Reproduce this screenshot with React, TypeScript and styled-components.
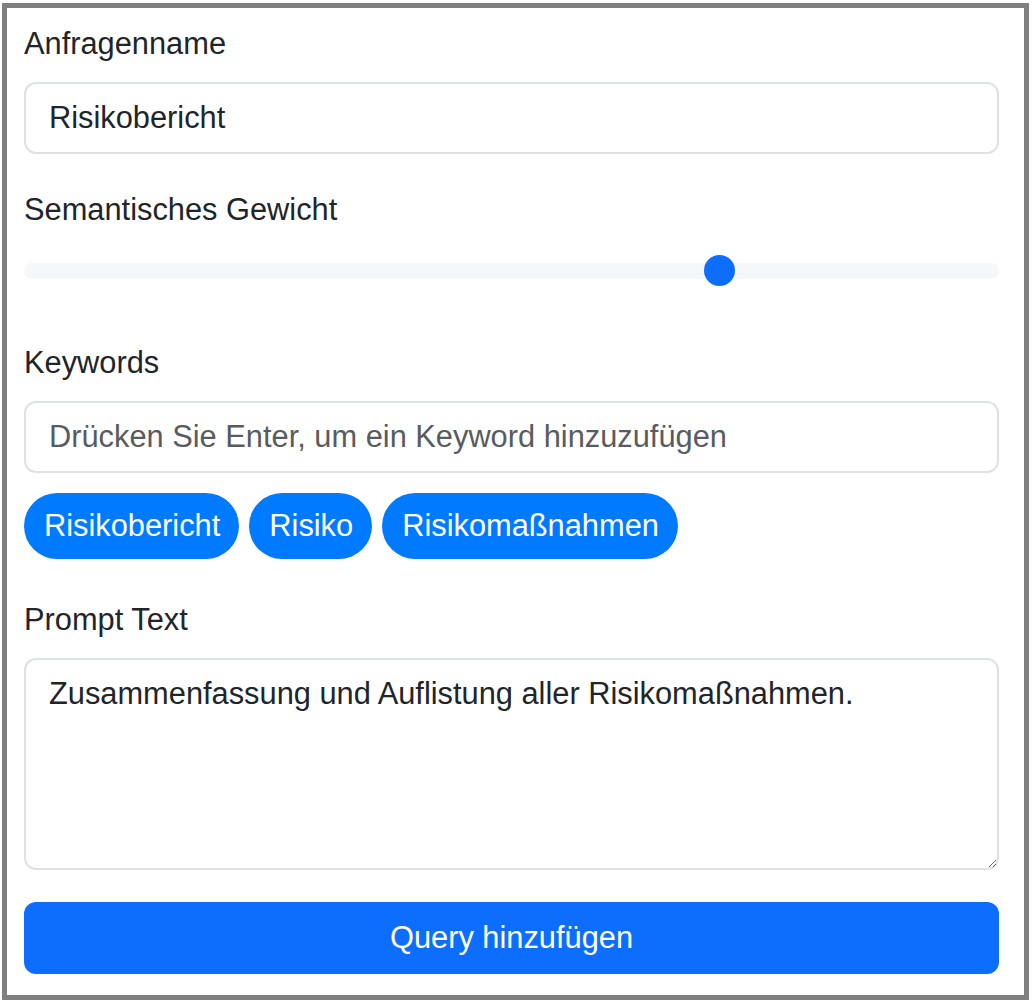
import React, { useState } from 'react';
import styled, { createGlobalStyle } from 'styled-components';

const GlobalStyle = createGlobalStyle`
  body {
    margin: 0;
    background: #ffffff;
    font-family: "Liberation Sans", Arial, sans-serif;
    color: #212529;
  }
`;

const Frame = styled.div`
  box-sizing: border-box;
  width: 1027px;
  height: 997px;
  margin: 3px 0 0 2px;
  border: 5px solid #808080;
  padding: 13px 25px 0 17px;
`;

const Group = styled.div<{ $gap?: number }>`
  margin-bottom: ${p => p.$gap ?? 33}px;
`;

const Label = styled.label`
  display: block;
  font-size: 30.8px;
  line-height: 46px;
  margin-bottom: 15px;
`;

const TextInput = styled.input`
  box-sizing: border-box;
  display: block;
  width: 100%;
  height: 72px;
  padding: 0 23px;
  border: 2px solid #dee2e6;
  border-radius: 12px;
  font-family: inherit;
  font-size: 30.8px;
  color: #212529;
  background: #fff;
  outline: none;
  &::placeholder {
    color: #595c5f;
  }
`;

const Range = styled.input`
  display: block;
  width: 100%;
  height: 45px;
  margin: 0;
  padding: 0;
  background: transparent;
  appearance: none;
  -webkit-appearance: none;
  &::-webkit-slider-runnable-track {
    height: 16px;
    border-radius: 8px;
    background: #f6f7f9;
  }
  &::-webkit-slider-thumb {
    -webkit-appearance: none;
    width: 31px;
    height: 31px;
    margin-top: -7.5px;
    border: none;
    border-radius: 50%;
    background: #0d6efd;
  }
`;

const Pills = styled.div`
  display: flex;
  flex-wrap: wrap;
  gap: 10px;
  margin-top: 20px;
`;

const Pill = styled.span`
  display: inline-block;
  height: 66px;
  line-height: 66px;
  padding: 0 19px 0 20px;
  border-radius: 33px;
  background: #007bff;
  color: #fff;
  font-size: 30.8px;
`;

const TextArea = styled.textarea`
  box-sizing: border-box;
  display: block;
  width: 100%;
  height: 212px;
  padding: 11px 23px;
  border: 2px solid #dee2e6;
  border-radius: 12px;
  font-family: inherit;
  font-size: 30.8px;
  line-height: 46px;
  color: #212529;
  outline: none;
`;

const SubmitButton = styled.button`
  display: block;
  width: 100%;
  height: 72px;
  border: none;
  border-radius: 12px;
  background: #0d6efd;
  color: #fff;
  font-family: inherit;
  font-size: 30.8px;
  cursor: pointer;
`;

const keywords = ['Risikobericht', 'Risiko', 'Risikomaßnahmen'];

const App: React.FC = () => {
  const [name, setName] = useState('Risikobericht');
  const [weight, setWeight] = useState(72);
  const [prompt, setPrompt] = useState('Zusammenfassung und Auflistung aller Risikomaßnahmen.');

  return (
    <>
      <GlobalStyle />
      <Frame>
        <Group>
          <Label>Anfragenname</Label>
          <TextInput value={name} onChange={e => setName(e.target.value)} />
        </Group>
        <Group $gap={47}>
          <Label>Semantisches Gewicht</Label>
          <Range
            type="range"
            min={0}
            max={100}
            value={weight}
            onChange={e => setWeight(Number(e.target.value))}
          />
        </Group>
        <Group $gap={38}>
          <Label>Keywords</Label>
          <TextInput placeholder="Drücken Sie Enter, um ein Keyword hinzuzufügen" />
          <Pills>
            {keywords.map(k => (
              <Pill key={k}>{k}</Pill>
            ))}
          </Pills>
        </Group>
        <Group $gap={32}>
          <Label>Prompt Text</Label>
          <TextArea value={prompt} onChange={e => setPrompt(e.target.value)} />
        </Group>
        <SubmitButton>Query hinzufügen</SubmitButton>
      </Frame>
    </>
  );
};

export default App;
